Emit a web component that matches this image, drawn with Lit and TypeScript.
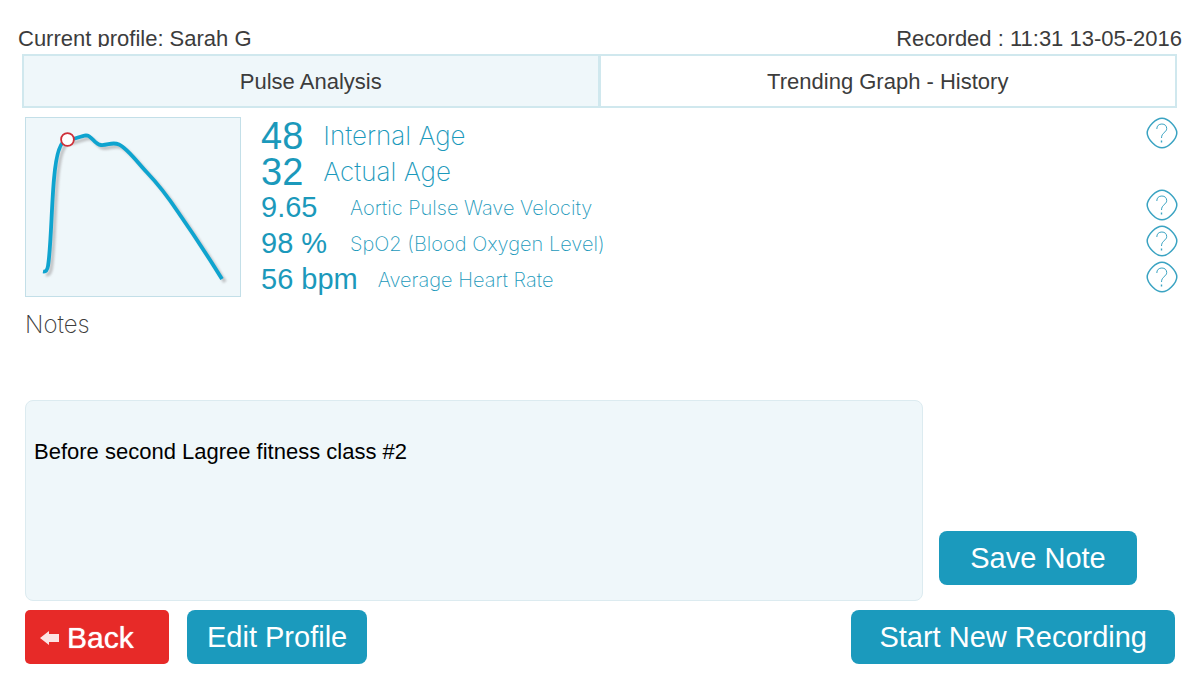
import { LitElement, html, css, svg, nothing } from "lit";
import { customElement, property, state } from "lit/decorators.js";

interface Metric {
  value: string;
  label: string;
  large: boolean;
  help: boolean;
}

const METRICS: Metric[] = [
  { value: "48", label: "Internal Age", large: true, help: true },
  { value: "32", label: "Actual Age", large: true, help: false },
  { value: "9.65", label: "Aortic Pulse Wave Velocity", large: false, help: true },
  { value: "98 %", label: "SpO2 (Blood Oxygen Level)", large: false, help: true },
  { value: "56 bpm", label: "Average Heart Rate", large: false, help: true },
];

@customElement("help-button")
class HelpButton extends LitElement {
  @property() topic = "";

  static styles = css`
    :host {
      display: block;
      align-self: flex-start;
    }
    .help {
      display: block;
      padding: 0;
      border: 0;
      background: none;
      cursor: pointer;
    }
    .icon {
      display: block;
      width: 32px;
      height: 32px;
      fill: none;
      stroke: #3aa3c2;
    }
  `;

  render() {
    return html`<button class="help" type="button" aria-label="Help: ${this.topic}">
      <svg class="icon" viewBox="0 0 32 32" aria-hidden="true">
        <path
          stroke-width="1.5"
          d="M16 1.2C19.2 1.2 22.6 3.2 25.4 6C28.400 9 30.800 12.800 30.800 16C30.800 19.200 28.400 23 25.400 26C22.600 28.800 19.200 30.800 16 30.800C12.800 30.800 9.400 28.800 6.600 26C3.600 23 1.200 19.200 1.200 16C1.200 12.800 3.600 9 6.600 6C9.400 3.200 12.800 1.200 16 1.200Z"
        />
        <path
          stroke-width="1"
          d="M10.800 12C10.800 8.800 12.800 7 15.900 7C18.900 7 20.700 8.900 20.700 11.500C20.700 15.500 15.500 15.500 15.500 21"
        />
        <path stroke-width="1.4" d="M15.500 23.500V25.500" />
      </svg>
    </button>`;
  }
}

@customElement("pulse-chart")
class PulseChart extends LitElement {
  static styles = css`
    :host {
      display: block;
    }
    .chart {
      display: block;
      box-sizing: border-box;
      width: 216px;
      height: 180px;
      border: 1px solid #c3dfe8;
      background: #eff7fa;
    }
    .curve {
      fill: none;
      stroke: #0fa4cf;
      stroke-width: 3.8;
      stroke-linejoin: round;
      filter: drop-shadow(3px 3px 1px rgba(90, 80, 80, 0.3));
    }
    .peak {
      fill: #fff;
      stroke: #cf2f38;
      stroke-width: 1.8;
    }
  `;

  render() {
    return html`<svg class="chart" viewBox="0 0 214 178" role="img" aria-label="Pulse waveform">
      ${svg`
        <path class="curve" d="M17 153.500C20 154 21.200 152.500 22 148C25 130 25.500 88 28 61C29.500 43 33 22.500 41 22C47 22.500 54 18 60 17.300C66 17 68 26.500 75 27C82 27.500 86 23.500 93 26.500C101 30 112 45 121 54.500C132 66 142 79 152 94C168 117 183 140 196 161"/>
        <circle class="peak" cx="41.500" cy="21.500" r="6.400"/>
      `}
    </svg>`;
  }
}

@customElement("app-root")
class AppRoot extends LitElement {
  @state() private tab = 0;

  static styles = css`
    :host {
      display: block;
      min-height: 100vh;
      box-sizing: border-box;
      padding: 24px 18px 8px;
      background: #fff;
      color: #3c3c3c;
      font-family: "Liberation Sans", Arial, sans-serif;
      font-size: 22px;
    }
    button {
      font: inherit;
      cursor: pointer;
    }
    .status {
      display: flex;
      justify-content: space-between;
      height: 23px;
      line-height: 29px;
      overflow: hidden;
      margin-bottom: 7px;
    }
    .tabs {
      display: grid;
      grid-template-columns: 1fr 1fr;
      margin: 0 5px 9px 4px;
    }
    .tab {
      height: 54px;
      padding: 2px 0 0;
      border: 2px solid #d0e8ee;
      background: #fff;
      color: #3c3c3c;
    }
    .tab + .tab {
      border-left-width: 1px;
    }
    .tab.active {
      background: #eff7fa;
    }
    .results {
      display: flex;
      gap: 20px;
      margin: 0 4px 0 7px;
    }
    .metrics {
      flex: 1;
      margin: 0;
    }
    .metric {
      display: flex;
      align-items: center;
      gap: 20px;
      height: 36px;
      color: #1b99bb;
    }
    .value {
      min-width: 69px;
      font-size: 29px;
      line-height: 36px;
    }
    .label {
      flex: 1;
      padding-top: 2px;
      font-family: Inter, Roboto, sans-serif;
      font-size: 20px;
      font-weight: 200;
      line-height: 36px;
    }
    .large .value {
      min-width: 42px;
      padding-top: 2px;
      font-size: 38px;
    }
    .large .label {
      font-size: 26px;
    }
    .notes-title {
      display: block;
      margin: 12px 7px 60px;
      font-family: Inter, Roboto, sans-serif;
      font-size: 24px;
      font-weight: 200;
      line-height: 31px;
    }
    .notes {
      display: flex;
      align-items: flex-end;
      gap: 16px;
      margin: 0 45px 9px 7px;
    }
    .note {
      flex: 1;
      box-sizing: border-box;
      height: 201px;
      padding: 38px 8px;
      border: 1px solid #dcebf0;
      border-radius: 8px;
      background: #eff7fa;
      color: #000;
      font: inherit;
      line-height: 26px;
      resize: none;
    }
    .button {
      height: 54px;
      padding: 0 28px;
      border: 0;
      border-radius: 8px;
      background: #1b9abd;
      color: #fff;
      font-size: 29px;
    }
    .save {
      width: 198px;
      margin-bottom: 16px;
    }
    .actions {
      display: flex;
      gap: 18px;
      margin: 0 7px;
    }
    .edit {
      padding: 0 20px;
    }
    .start {
      margin-left: auto;
    }
    .back {
      display: flex;
      align-items: center;
      gap: 8px;
      width: 144px;
      padding: 2px 15px 0;
      border-radius: 5px;
      background: #e72a28;
      font-size: 30px;
      text-shadow: 0 0 1px #fff;
    }
    .arrow {
      width: 19px;
      height: 14px;
      fill: #fde3e3;
    }
  `;

  render() {
    return html`
      <header class="status">
        <span>Current profile: Sarah G</span>
        <span>Recorded : 11:31 13-05-2016</span>
      </header>
      <nav class="tabs" role="tablist">
        ${["Pulse Analysis", "Trending Graph - History"].map(
          (name, i) => html`<button
            class="tab ${i === this.tab ? "active" : ""}"
            type="button"
            role="tab"
            aria-selected=${i === this.tab}
            @click=${() => (this.tab = i)}
          >${name}</button>`
        )}
      </nav>
      <section class="results">
        <pulse-chart></pulse-chart>
        <div class="metrics">
          ${METRICS.map(
            (m) => html`<div class="metric ${m.large ? "large" : ""}">
              <span class="value">${m.value}</span>
              <span class="label">${m.label}</span>
              ${m.help ? html`<help-button .topic=${m.label}></help-button>` : nothing}
            </div>`
          )}
        </div>
      </section>
      <label class="notes-title" for="note">Notes</label>
      <section class="notes">
        <textarea class="note" id="note" .value=${"Before second Lagree fitness class #2"}></textarea>
        <button class="button save" type="button">Save Note</button>
      </section>
      <footer class="actions">
        <button class="button back" type="button">
          <svg class="arrow" viewBox="0 0 19 14" aria-hidden="true">
            <path d="M0 7L9 0V3H19V11H9V14Z" />
          </svg>
          Back
        </button>
        <button class="button edit" type="button">Edit Profile</button>
        <button class="button start" type="button">Start New Recording</button>
      </footer>
    `;
  }
}
